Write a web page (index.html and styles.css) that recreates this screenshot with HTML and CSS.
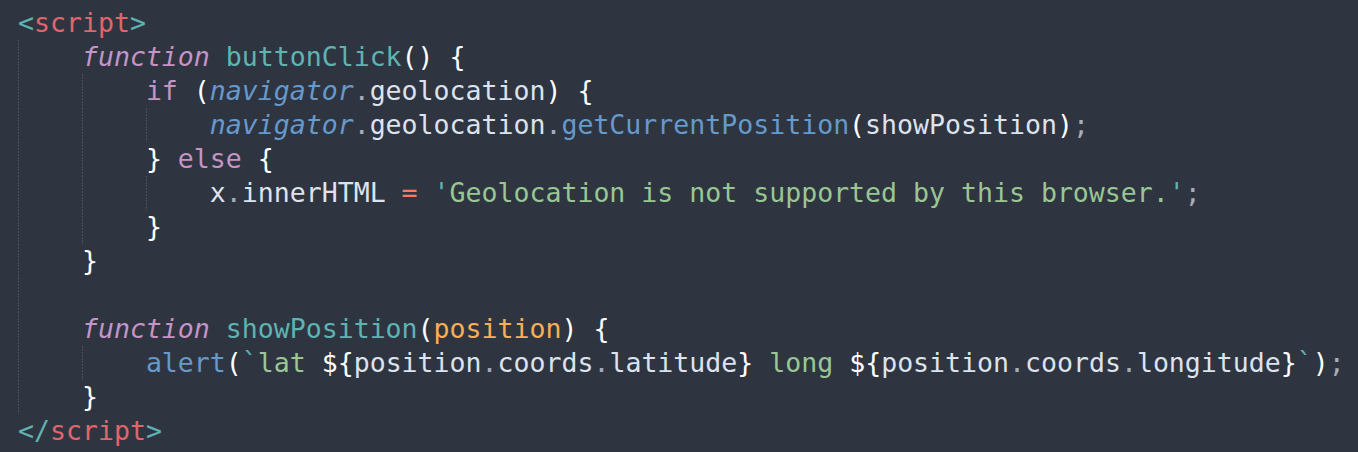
FILE: index.html
```html
<!DOCTYPE html>
<html lang="en">
<head>
<meta charset="utf-8">
<title>Code</title>
<link rel="stylesheet" href="styles.css">
</head>
<body>
<div class="code">
<div class="line"><span class="tb">&lt;</span><span class="tn">script</span><span class="tb">&gt;</span></div>
<div class="line g1">    <span class="kw-i">function</span> <span class="fn">buttonClick</span><span class="br">()</span> <span class="br">{</span></div>
<div class="line g2">        <span class="kw">if</span> <span class="br">(</span><span class="obj">navigator</span><span class="pu">.</span>geolocation<span class="br">)</span> <span class="br">{</span></div>
<div class="line g3">            <span class="obj">navigator</span><span class="pu">.</span>geolocation<span class="pu">.</span><span class="me">getCurrentPosition</span><span class="br">(</span>showPosition<span class="br">)</span><span class="pu">;</span></div>
<div class="line g2">        <span class="br">}</span> <span class="kw">else</span> <span class="br">{</span></div>
<div class="line g3">            x<span class="pu">.</span>innerHTML <span class="op">=</span> <span class="q">'</span><span class="st">Geolocation is not supported by this browser.</span><span class="q">'</span><span class="pu">;</span></div>
<div class="line g2">        <span class="br">}</span></div>
<div class="line g1">    <span class="br">}</span></div>
<div class="line g1"> </div>
<div class="line g1">    <span class="kw-i">function</span> <span class="fn">showPosition</span><span class="br">(</span><span class="pa">position</span><span class="br">)</span> <span class="br">{</span></div>
<div class="line g2">        <span class="me">alert</span><span class="br">(</span><span class="q">`</span><span class="st">lat </span><span class="br">${</span>position<span class="pu">.</span>coords<span class="pu">.</span>latitude<span class="br">}</span><span class="st"> long </span><span class="br">${</span>position<span class="pu">.</span>coords<span class="pu">.</span>longitude<span class="br">}</span><span class="q">`</span><span class="br">)</span><span class="pu">;</span></div>
<div class="line g1">    <span class="br">}</span></div>
<div class="line"><span class="tb">&lt;/</span><span class="tn">script</span><span class="tb">&gt;</span></div>
</div>
</body>
</html>
```
FILE: styles.css
```css
html, body {
  margin: 0;
  padding: 0;
  background: #2f3540;
  height: 100%;
}

.code {
  padding: 6px 0 0 18px;
  font-family: "DejaVu Sans Mono", "Liberation Mono", monospace;
  font-size: 26.55px;
  line-height: 34px;
  color: #dde3ec;
}

.line {
  white-space: pre;
  height: 34px;
  margin-left: -18px;
  padding-left: 18px;
  background-repeat: repeat-y;
}

.g1 {
  background-image: repeating-linear-gradient(to bottom, #4a505c 0 2px, transparent 2px 3px);
  background-size: 1px 100%;
  background-position: 18px 0;
}

.g2 {
  background-image:
    repeating-linear-gradient(to bottom, #4a505c 0 2px, transparent 2px 3px),
    repeating-linear-gradient(to bottom, #4a505c 0 2px, transparent 2px 3px);
  background-size: 1px 100%, 1px 100%;
  background-position: 18px 0, 82px 0;
}

.g3 {
  background-image:
    repeating-linear-gradient(to bottom, #4a505c 0 2px, transparent 2px 3px),
    repeating-linear-gradient(to bottom, #4a505c 0 2px, transparent 2px 3px),
    repeating-linear-gradient(to bottom, #4a505c 0 2px, transparent 2px 3px);
  background-size: 1px 100%, 1px 100%, 1px 100%;
  background-position: 18px 0, 82px 0, 146px 0;
}

.tb { color: #5fb3b3; }
.tn { color: #e2646c; }
.kw { color: #c594c5; }
.kw-i { color: #c594c5; font-style: italic; }
.fn { color: #5fb3b3; }
.br { color: #ffffff; }
.obj { color: #6699cc; font-style: italic; }
.me { color: #6699cc; }
.pu { color: #a6acb9; }
.op { color: #f97b58; }
.q { color: #5fb3b3; }
.st { color: #99c794; }
.pa { color: #f9ae58; }
```
